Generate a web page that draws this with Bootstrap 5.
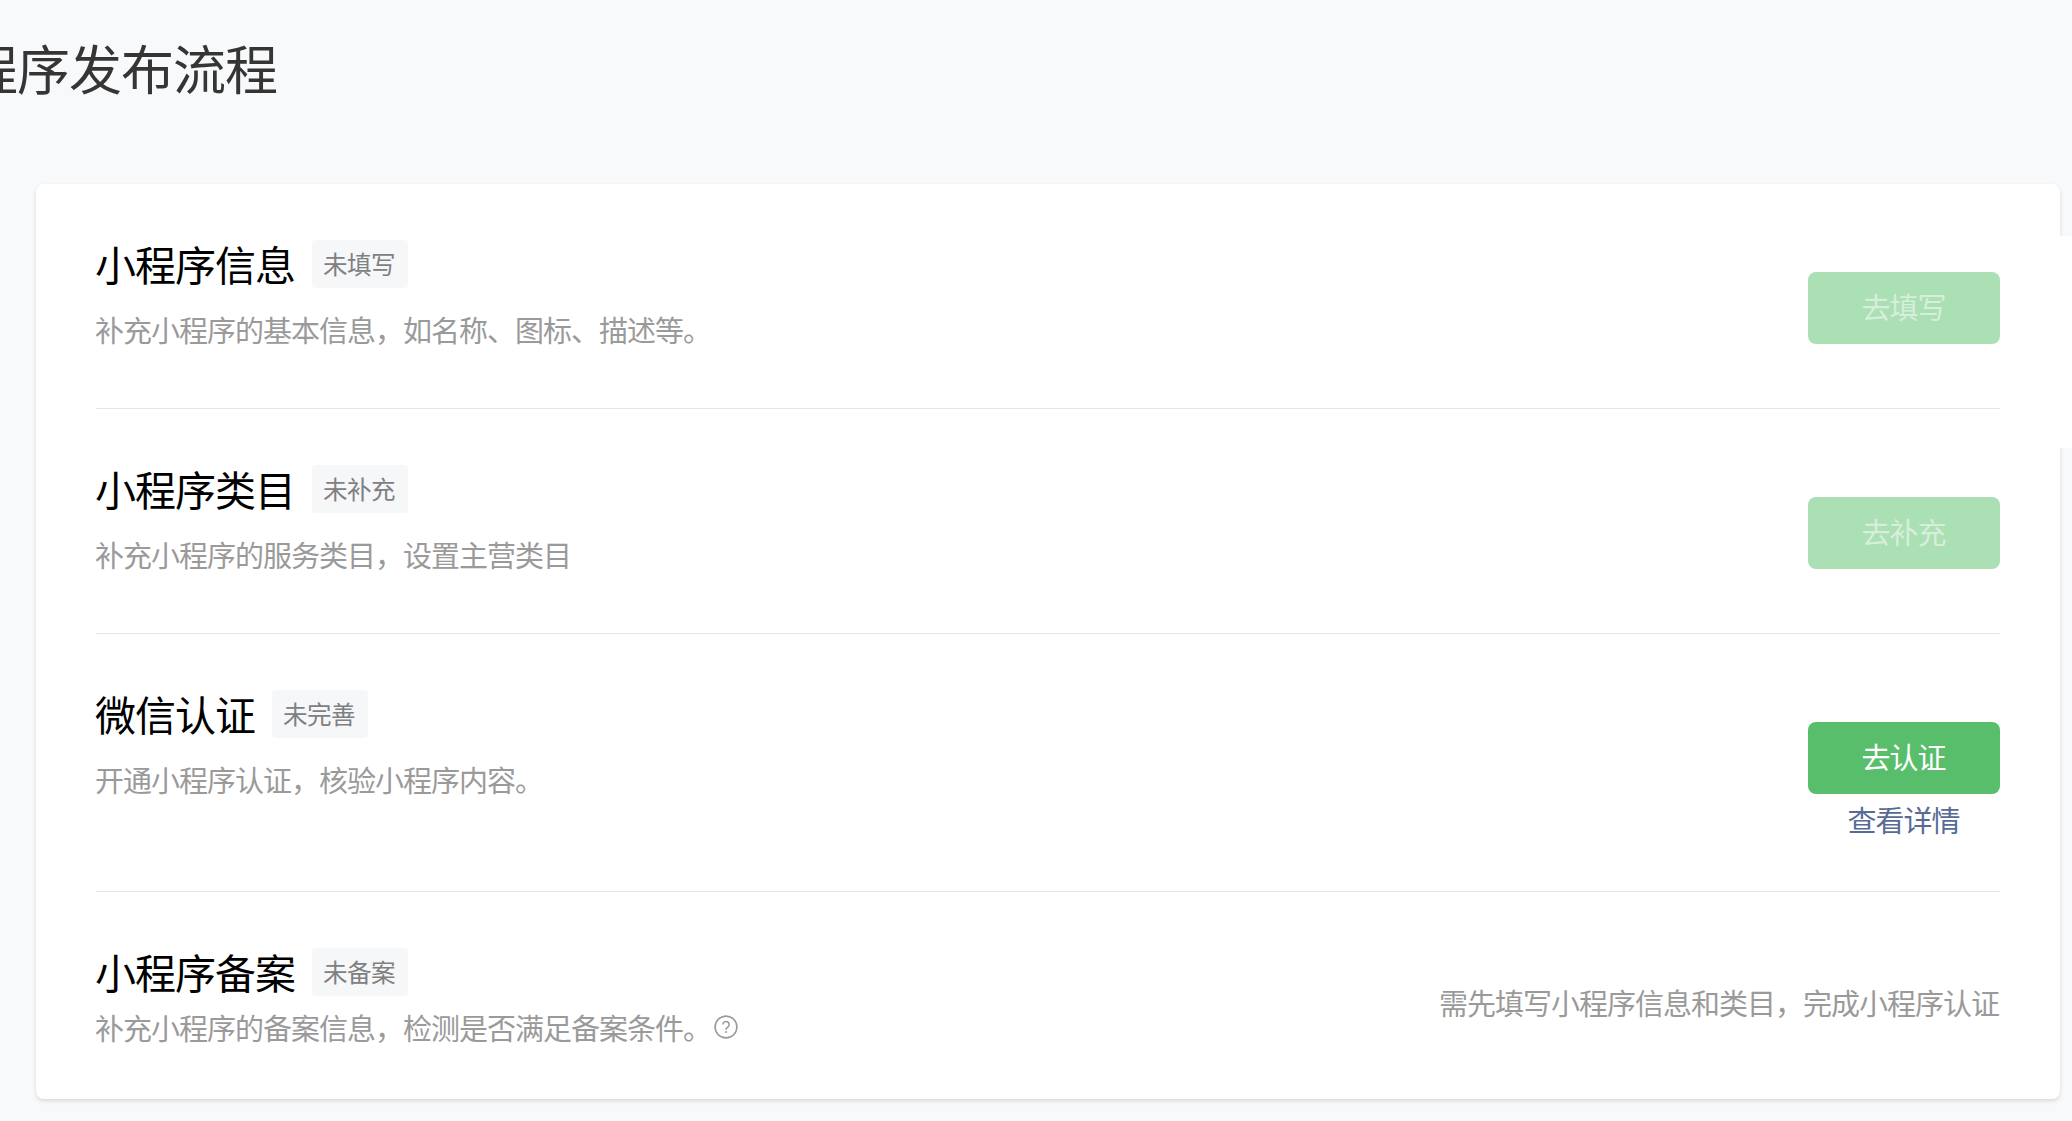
<!DOCTYPE html>
<html lang="zh-CN">
<head>
    <meta charset="UTF-8">
    <meta name="viewport" content="width=device-width, initial-scale=1.0">
    <title>小程序发布流程</title>
    <!-- Bootstrap CSS -->
    <link rel="stylesheet" href="https://cdn.jsdelivr.net/npm/bootstrap@5.3.2/dist/css/bootstrap.min.css">
    <style>
        body {
            background-color: #f8f9fb;
            font-family: "Noto Sans CJK SC", sans-serif;
            font-size: 29px;
            letter-spacing: -1px;
            line-height: 40px;
            color: #9a9a9a;
            height: 1121px;
            overflow: hidden;
        }
        .page-title {
            margin: 0 0 0 -35px;
            padding-top: 31px;
            height: 184px;
            font-size: 53px;
            line-height: 72px;
            font-weight: 400;
            color: #353535;
            white-space: nowrap;
        }
        .step-card {
            margin: 0 12px 0 36px;
            padding: 0 60px;
            height: 915px;
            border: 0;
            border-radius: 8px;
            box-shadow: 0 2px 4px rgba(0, 0, 0, .13);
        }
        .step {
            flex: 0 0 225px;
            padding-top: 56px;
            border-bottom: 1px solid #e4e5e6;
        }
        .step-tall {
            flex-basis: 258px;
        }
        .step-last {
            flex-basis: 207px;
            border-bottom: 0;
        }
        .step-title {
            margin: 0;
            font-size: 41px;
            line-height: 46px;
            font-weight: 400;
            color: #000;
            text-indent: -1px;
        }
        .step-tag {
            margin-left: 17px;
            padding: 0 12px 2px;
            border-radius: 4px;
            background-color: #f6f7f9;
            color: #7e8081;
            font-size: 24.6px;
            letter-spacing: -.6px;
            line-height: 46px;
            text-indent: -1px;
            width: 96px;
            white-space: nowrap;
        }
        .step-desc {
            margin: 21px 0 0;
            text-indent: -1px;
        }
        .desc-close {
            margin-top: 11px;
        }
        .step-action {
            padding-top: 32px;
            width: 192px;
        }
        .step-note {
            padding-top: 34px;
            margin-right: 1px;
        }
        .btn-go {
            --bs-btn-bg: #58be6b;
            --bs-btn-color: #fff;
            --bs-btn-hover-bg: #4fb062;
            --bs-btn-hover-color: #fff;
            --bs-btn-disabled-bg: #abdfb4;
            --bs-btn-disabled-color: #d5efda;
            --bs-btn-disabled-opacity: 1;
            --bs-btn-border-radius: 8px;
            --bs-btn-font-size: 29px;
            display: block;
            height: 72px;
            padding: 0 1px 3px 0;
            border: 0;
            letter-spacing: -1px;
            line-height: 69px;
        }
        .detail-link {
            margin-top: 5px;
            padding-right: 1px;
            color: #576b95;
        }
        .help-icon {
            margin-left: 3px;
        }
        .side-strip {
            top: 236px;
            right: 0;
            width: 12px;
            height: 212px;
        }
    </style>
</head>
<body class="position-relative">
    <h1 class="page-title">程序发布流程</h1>

    <div class="card step-card">
        <div class="step d-flex justify-content-between align-items-start">
            <div>
                <div class="d-flex">
                    <h2 class="step-title">小程序信息</h2>
                    <span class="step-tag">未填写</span>
                </div>
                <p class="step-desc">补充小程序的基本信息，如名称、图标、描述等。</p>
            </div>
            <div class="step-action">
                <button type="button" class="btn btn-go w-100" disabled>去填写</button>
            </div>
        </div>

        <div class="step d-flex justify-content-between align-items-start">
            <div>
                <div class="d-flex">
                    <h2 class="step-title">小程序类目</h2>
                    <span class="step-tag">未补充</span>
                </div>
                <p class="step-desc">补充小程序的服务类目，设置主营类目</p>
            </div>
            <div class="step-action">
                <button type="button" class="btn btn-go w-100" disabled>去补充</button>
            </div>
        </div>

        <div class="step step-tall d-flex justify-content-between align-items-start">
            <div>
                <div class="d-flex">
                    <h2 class="step-title">微信认证</h2>
                    <span class="step-tag">未完善</span>
                </div>
                <p class="step-desc">开通小程序认证，核验小程序内容。</p>
            </div>
            <div class="step-action">
                <button type="button" class="btn btn-go w-100">去认证</button>
                <a href="#" class="detail-link d-block text-center text-decoration-none">查看详情</a>
            </div>
        </div>

        <div class="step step-last d-flex justify-content-between align-items-start">
            <div>
                <div class="d-flex">
                    <h2 class="step-title">小程序备案</h2>
                    <span class="step-tag">未备案</span>
                </div>
                <p class="step-desc desc-close d-flex align-items-center">
                    <span>补充小程序的备案信息，检测是否满足备案条件。</span>
                    <svg class="help-icon" width="24" height="24" viewBox="0 0 24 24" fill="none" stroke="#9a9a9a" stroke-width="1.6">
                        <circle cx="12" cy="12" r="10.9"/>
                        <path d="M8.9 9.6a3.1 3.1 0 1 1 4.9 2.5c-1.1.8-1.8 1.3-1.8 2.6"/>
                        <circle cx="12" cy="17.1" r="1" fill="#9a9a9a" stroke="none"/>
                    </svg>
                </p>
            </div>
            <div class="step-note">需先填写小程序信息和类目，完成小程序认证</div>
        </div>
    </div>

    <!-- white strip over the right margin -->
    <div class="side-strip position-absolute bg-white"></div>

    <!-- Bootstrap JS -->
    <script src="https://cdn.jsdelivr.net/npm/bootstrap@5.3.2/dist/js/bootstrap.bundle.min.js"></script>
</body>
</html>
